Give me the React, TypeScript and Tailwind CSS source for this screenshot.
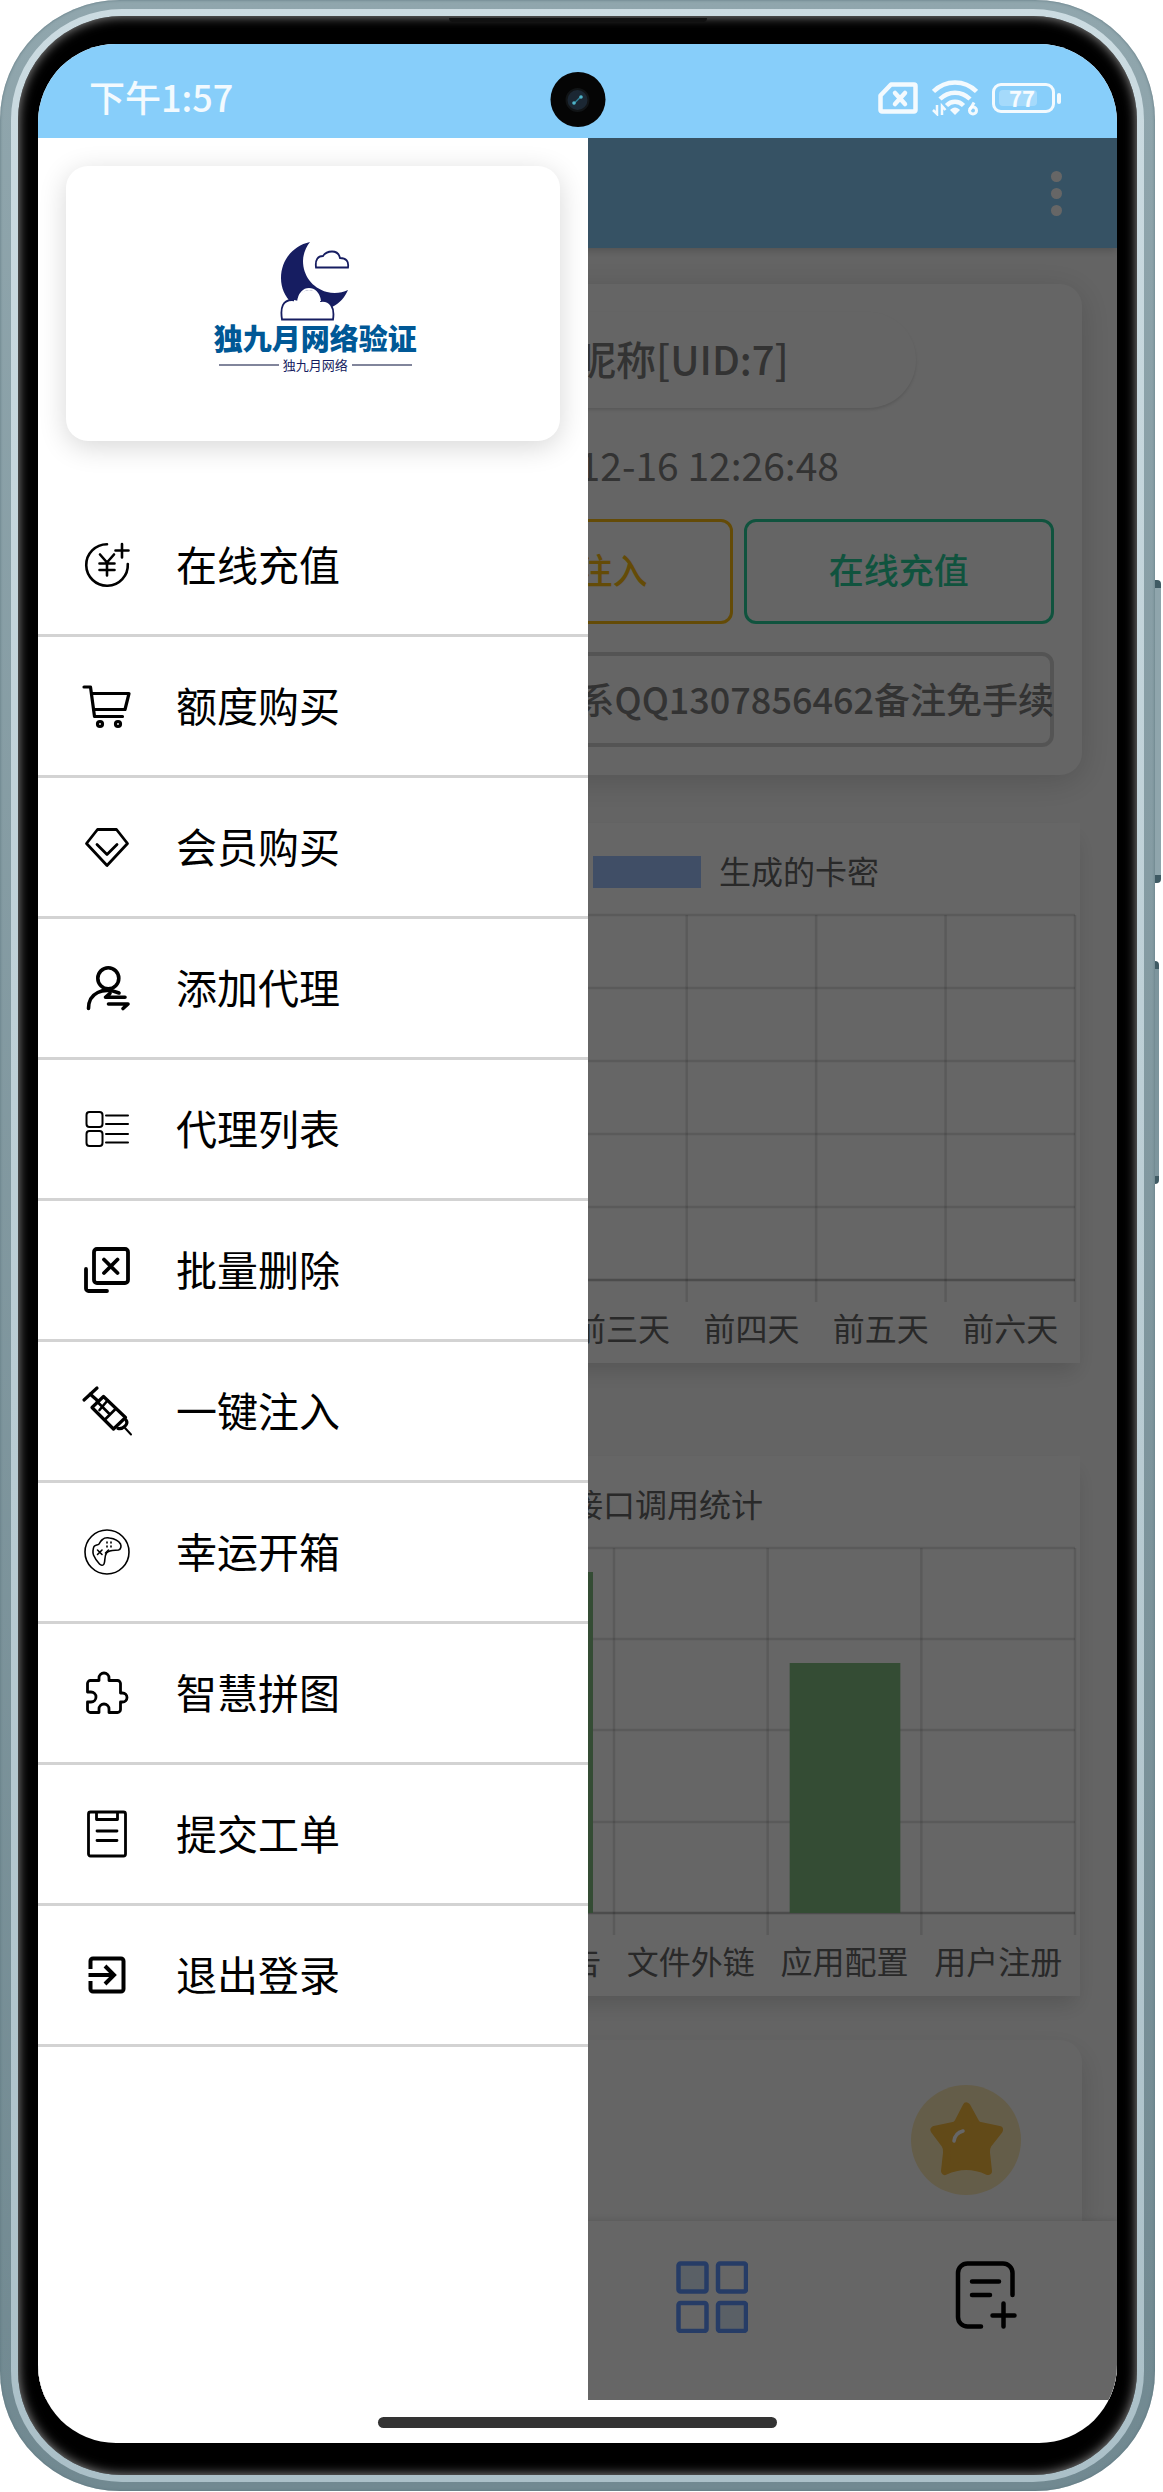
import type { ReactNode } from 'react';

interface MenuItem {
    label: string;
    strokeWidth: number;
    icon: ReactNode;
}

const menuItems: MenuItem[] = [
    {
        label: '在线充值',
        strokeWidth: 2.6,
        icon: (
            <>
                <path d="M24 3.2A20.8 20.8 0 1 0 44.8 23" />
                <path d="M32.5 9.5h13M39 3v13.5" />
                <path d="m17 13.5 7 8 7-8M24 21.5v13M16.5 22.5h15M16.5 29h15" />
            </>
        ),
    },
    {
        label: '额度购买',
        strokeWidth: 3.2,
        icon: (
            <>
                <path d="M1 5h6.500l4 29.500H39.500" />
                <path d="M9 11.500h37l-4 16H11" />
                <circle cx="17" cy="42" r="2.500" />
                <circle cx="35" cy="42" r="2.500" />
            </>
        ),
    },
    {
        label: '会员购买',
        strokeWidth: 2.8,
        icon: (
            <>
                <path d="M14.500 6.500h19l11 14L24 42.500l-20.500-22z" />
                <path d="m14 21.500 10 10 10-10" />
            </>
        ),
    },
    {
        label: '添加代理',
        strokeWidth: 3.6,
        icon: (
            <>
                <circle cx="25.300" cy="14.300" r="10.500" />
                <path d="M5.500 44.500C5.500 29 20 22.500 36 29" />
                <path d="M42 33.300H22.500l4.500-4M25.500 40H45l-5 4.500" />
            </>
        ),
    },
    {
        label: '代理列表',
        strokeWidth: 2,
        icon: (
            <>
                <rect x="3.500" y="7" width="16" height="15" rx="3" />
                <rect x="3.500" y="26" width="16" height="15" rx="3" />
                <path d="M23 10.500h22M23 19h22M23 29h22M23 37.500h22" />
            </>
        ),
    },
    {
        label: '批量删除',
        strokeWidth: 3.8,
        icon: (
            <>
                <rect x="11" y="3" width="34" height="34" rx="3" />
                <path d="m21 13.500 13.500 13.500M34.500 13.500 21 27" />
                <path d="M3 23v19.500a2.500 2.500 0 0 0 2.500 2.500H24" />
            </>
        ),
    },
    {
        label: '一键注入',
        strokeWidth: 3.2,
        icon: (
            <>
                <path d="M1 13 14 1M7 7l8 7" />
                <path d="m20.500 9.500 22 21-12 11.500L9 20.500z" />
                <path d="m14 14.500 12 12M22 32.500l11-11M16.500 23l8-9.500" strokeWidth="2.600" />
                <path d="M43 33c3 4-3 9.500-8 8.500" />
                <path d="m42 41 6 6.500" strokeWidth="2" />
            </>
        ),
    },
    {
        label: '幸运开箱',
        strokeWidth: 1.6,
        icon: (
            <>
                <circle cx="24" cy="24" r="22" />
                <path d="M19.500 11.500c2-2 4-2 7-1.500 4 .5 9 2.500 11 6 1 2 .5 5.500-2 6-4 .5-9-.5-12 3-2.500 3.500-1 8-2.500 11-1 2-3 1.500-4.500 0-3-3-4.500-5.500-6-9-1-2-.5-6.500.5-8.500 1.500-2 3.500-1 5-2.500 1.500-2 1.500-3 3.500-4.500z" />
                <path d="m14.500 22 4.500 4.500M19 22l-4.500 4.500M22.500 25l3-3" />
                <path d="M24 14v1M28 14v1M24 18v1M28 18v1" />
            </>
        ),
    },
    {
        label: '智慧拼图',
        strokeWidth: 2.8,
        icon: (
            <path d="M16 11.500V9a5 5 0 0 1 10 0v2.500h8.500a3 3 0 0 1 3 3V24h2a4.500 4.500 0 0 1 0 9h-2v7.500a3 3 0 0 1-3 3H26V40a5 5 0 0 0-10 0v3.500H7.500a3 3 0 0 1-3-3V33H8a5 5 0 0 0 0-10H4.500v-8.500a3 3 0 0 1 3-3z" />
        ),
    },
    {
        label: '提交工单',
        strokeWidth: 2.8,
        icon: (
            <>
                <rect x="5.500" y="2" width="37" height="44" rx="2" />
                <path d="M13.500 2.500V9.500h21V2.500M14 21h20M14 30.500h20" />
            </>
        ),
    },
    {
        label: '退出登录',
        strokeWidth: 4,
        icon: (
            <>
                <path d="M7.500 18V10a2.500 2.500 0 0 1 2.500-2.500h28a2.500 2.500 0 0 1 2.500 2.500v28a2.500 2.500 0 0 1-2.500 2.500H10a2.500 2.500 0 0 1-2.500-2.500v-8" strokeLinecap="butt" />
                <path d="M5.500 24H31M22 15l9 9-9 9" strokeLinecap="butt" strokeLinejoin="miter" />
            </>
        ),
    },
];

function StatusBar() {
    return (
        <header className="relative flex h-[94px] items-center justify-between bg-[#87cefa] pr-14 pl-[51px] pt-3.5">
            <time className="pb-1 text-[36px] leading-10 font-medium text-white/90">下午1:57</time>
            <div className="absolute top-7 left-1/2 flex size-[55px] -translate-x-1/2 items-center justify-center rounded-full bg-[#050505]">
                <div className="flex size-6 items-center justify-center rounded-full border-2 border-[#111416] bg-[#1b2733]">
                    <svg viewBox="0 0 16 16" className="size-4" aria-hidden="true">
                        <path d="m4 12 8-8" stroke="#2c7f96" strokeWidth="1.500" />
                        <circle cx="4.500" cy="11" r="1.800" fill="#4fb3c8" />
                        <circle cx="11.500" cy="5" r="1.800" fill="#4fb3c8" />
                    </svg>
                </div>
            </div>
            <div className="flex items-center gap-3.5 text-white/90">
                <svg viewBox="0 0 40 32" className="h-8 w-10" fill="none" stroke="currentColor" strokeWidth="4.500" strokeLinejoin="round" aria-hidden="true">
                    <path d="M13 2.500h23a1.500 1.500 0 0 1 1.500 1.500v24a1.500 1.500 0 0 1-1.500 1.500H4A1.500 1.500 0 0 1 2.500 28V13.500z" />
                    <path d="m17 11 10 11M27 11 17 22" strokeLinecap="round" />
                </svg>
                <svg viewBox="0 0 46 36" className="h-9 w-[46px]" fill="none" stroke="currentColor" strokeWidth="4.500" aria-hidden="true">
                    <path d="M1.500 11.500c12-12 31-12 43 0M8 19c8.500-8.500 21.500-8.500 30 0M14.500 25.500c5-5 12-5 17 0" />
                    <path d="m18 30 5 5 5-5c-3-3.500-7-3.500-10 0z" fill="currentColor" stroke="none" />
                    <path d="M5 25v9l-4-4M10 35v-9l3.500 4" strokeWidth="2.500" />
                    <circle cx="41" cy="30.500" r="3.500" strokeWidth="3" />
                    <path d="m38 29.500 4-7" strokeWidth="3" />
                </svg>
                <div className="flex items-center gap-0.5">
                    <div className="h-[30px] w-[63px] rounded-[9px] border-3 border-white/90 p-1">
                        <div className="flex h-full w-[38px] items-center justify-end rounded-sm bg-white/25 pr-0.5 pb-0.5 text-[22px] leading-4 font-bold">77</div>
                    </div>
                    <div className="h-[11px] w-1 rounded-sm bg-white/90" />
                </div>
            </div>
        </header>
    );
}

function Logo() {
    return (
        <div className="flex flex-col items-center pt-2 pl-1">
            <svg viewBox="0 0 70 80" className="h-20 w-[70px]" aria-hidden="true">
                <path d="M30 1C12 5 1 20 1 37c0 10 4 19 11 25l40 4c8-4 13-10 16-17-6 3-14 4-21 2C32 47 23 34 23 20c0-7 3-14 7-19z" fill="#161d61" />
                <path d="M2 78.500C0 66 3 59 12 59c2 0 3 .5 5 1 2-9 7-12 12-12 7 0 11 5 12 12 9-1 14 6 12 18.500z" fill="#fff" stroke="#161d61" strokeWidth="1.800" />
                <path d="M14 60c2 0 2 1 4 1 1-9 6-13 11-13s10 4 11 12" fill="none" stroke="#fff" strokeWidth="2" />
                <path d="M36 26.500c-1-8 2-11.500 7-11.500 2-3 5-4.500 9-4.500s7 2 8 6.500c6 0 9 3 8 9.500z" fill="#fff" stroke="#161d61" strokeWidth="1.800" />
            </svg>
            <p className="text-[29px] leading-8 font-black text-[#005896]">独九月网络验证</p>
            <p className="mt-0.5 flex items-center gap-1 text-[13px] leading-5 text-[#161d61]">
                <span className="h-0.5 w-[60px] bg-[#81859b]" />
                独九月网络
                <span className="h-0.5 w-[60px] bg-[#81859b]" />
            </p>
        </div>
    );
}

function Drawer() {
    return (
        <aside className="absolute inset-y-0 left-0 w-[51%] overflow-hidden bg-white pt-7">
            <div className="mx-7 flex h-[275px] items-center justify-center rounded-[22px] bg-white shadow-[0_6px_28px_rgba(0,0,0,0.16)]">
                <Logo />
            </div>
            <nav className="mt-[55px]">
                {menuItems.map((item) => (
                    <a
                        key={item.label}
                        href="#"
                        className="flex h-[141px] items-center gap-[45px] border-b-3 border-[#d3d3d3] pl-[45px] text-[41px] leading-none text-black"
                    >
                        <svg
                            viewBox="0 0 48 48"
                            className="size-12 overflow-visible"
                            fill="none"
                            stroke="currentColor"
                            strokeWidth={item.strokeWidth}
                            strokeLinecap="round"
                            strokeLinejoin="round"
                            aria-hidden="true"
                        >
                            {item.icon}
                        </svg>
                        <span className="pb-1">{item.label}</span>
                    </a>
                ))}
            </nav>
        </aside>
    );
}

interface ChartProps {
    left: number;
    labels: string[];
    rows: number[];
    bars: number[];
    barColor: string;
    children: ReactNode;
}

function BarChart({ left, labels, rows, bars, barColor, children }: ChartProps) {
    const right = 1000;
    const step = (right - left) / labels.length;
    const top = rows[0];
    const bottom = rows[rows.length - 1];

    return (
        <svg viewBox="0 0 1005 540" className="block w-full bg-white shadow-[0_12px_20px_-4px_rgba(0,0,0,0.14)]" fontSize="32" fill="#666">
            {children}
            {rows.map((y) => (
                <path key={y} d={`M${left} ${y}H${right}`} stroke="#000" strokeWidth="2.500" opacity={y === bottom ? 0.25 : 0.11} />
            ))}
            {[...labels, ''].map((_, i) => (
                <path key={i} d={`M${left + i * step} ${top}V${bottom + 22}`} stroke="#000" strokeWidth="2.500" opacity="0.110" />
            ))}
            {bars.map((value, i) => (
                <rect key={i} x={left + i * step + 22} y={bottom - value} width={step - 43} height={value} fill={barColor} />
            ))}
            {labels.map((label, i) => (
                <text key={i} x={left + (i + 0.5) * step} y={bottom + 61} textAnchor="middle">
                    {label}
                </text>
            ))}
        </svg>
    );
}

function AccountCard() {
    return (
        <section className="mx-[35px] mt-9 rounded-[22px] bg-[#fcfcfc] p-7 shadow-[0_6px_32px_rgba(0,0,0,0.16)]">
            <div className="mx-auto flex h-24 w-[71%] items-center justify-end rounded-full pr-[127px] pb-1 text-[40px] font-medium whitespace-nowrap text-[#808080] shadow-[0_2px_3px_rgba(0,0,0,0.12)]">
                昵称[UID:7]
            </div>
            <p className="mt-8 pr-[215px] text-right text-[39px] leading-12 text-[#808080]">12-16 12:26:48</p>
            <div className="mt-[31px] grid grid-cols-3 gap-[11px] text-[35px] font-medium">
                <button type="button" className="col-start-2 h-[105px] rounded-xl border-3 border-[#f9bb12] pb-1 text-[#f9bb12]">
                    一键注入
                </button>
                <button type="button" className="h-[105px] rounded-xl border-3 border-[#2ad09c] pb-1 text-[#2ad09c]">
                    在线充值
                </button>
            </div>
            <div className="relative mt-7 h-[95px] rounded-xl border-4 border-[#d3d3d3]">
                <p className="absolute inset-y-0 -right-1 flex items-center justify-end overflow-hidden pb-1 text-[36px] font-medium whitespace-nowrap text-[#808080]">
                    联系QQ1307856462备注免手续
                </p>
            </div>
        </section>
    );
}

function Dashboard() {
    return (
        <div className="bg-[#fafafa]">
            <div className="flex h-[110px] items-center justify-end bg-[#87cefa] pr-[55px] shadow-[0_2px_8px_rgba(0,0,0,0.2)]">
                <button type="button" aria-label="更多" className="flex flex-col gap-1.5">
                    <span className="size-[11px] rounded-full bg-white" />
                    <span className="size-[11px] rounded-full bg-white" />
                    <span className="size-[11px] rounded-full bg-white" />
                </button>
            </div>
            <AccountCard />
            <div className="mx-[37px] mt-12">
                <BarChart
                    left={94}
                    labels={['', '', '', '前三天', '前四天', '前五天', '前六天']}
                    rows={[92, 165, 238, 311, 384, 457]}
                    bars={[]}
                    barColor="#a0c4ff"
                >
                    <rect x="518" y="33" width="108" height="32" fill="#a0c4ff" />
                    <text x="644" y="61">生成的卡密</text>
                </BarChart>
            </div>
            <div className="mx-[37px] mt-[93px]">
                <BarChart
                    left={78}
                    labels={['', '', '应用公告', '文件外链', '应用配置', '用户注册']}
                    rows={[92, 183, 274, 366, 457]}
                    bars={[0, 0, 341, 0, 250, 0]}
                    barColor="#82be82"
                >
                    <text x="496" y="61">接口调用统计</text>
                </BarChart>
            </div>
            <section className="mx-[35px] mt-11 flex h-[181px] justify-end rounded-t-[22px] bg-[#fcfcfc] pt-[45px] pr-[61px] shadow-[0_12px_28px_rgba(0,0,0,0.14)]">
                <svg viewBox="0 0 110 110" className="size-[110px]" aria-hidden="true">
                    <circle cx="55" cy="55" r="55" fill="#fbe8b6" />
                    <path
                        d="M55.500 21.500 64 37q1.500 3 5 4l19 4-11 14q-2.500 4-2 9l2 18q-22-10-43 0l2-18q.5-5-2-9L23.500 45l19-4q3.500-1 5-4z"
                        fill="#f5b83d"
                        stroke="#f5b83d"
                        strokeWidth="8"
                        strokeLinejoin="round"
                    />
                    <path d="M43 56q1-8 9-10" fill="none" stroke="#fff" strokeWidth="3.500" strokeLinecap="round" />
                </svg>
            </section>
            <nav className="relative grid h-[179px] grid-cols-4 items-start justify-items-center bg-white pt-10 shadow-[0_-1px_6px_rgba(0,0,0,0.12)]">
                <a href="#" aria-label="应用" className="col-start-3">
                    <svg viewBox="0 0 72 72" className="size-[72px]" fill="none" stroke="#6096ff" strokeWidth="4.500" aria-hidden="true">
                        <rect x="2.500" y="2.500" width="28" height="28" rx="2" fill="#e1efff" />
                        <rect x="42" y="2.500" width="28" height="28" rx="2" />
                        <rect x="2.500" y="42" width="28" height="28" rx="2" />
                        <rect x="42" y="42" width="28" height="28" rx="2" fill="#e1efff" />
                    </svg>
                </a>
                <a href="#" aria-label="新建">
                    <svg viewBox="0 0 72 72" className="size-[72px]" fill="none" stroke="#000" strokeWidth="4.500" strokeLinecap="round" aria-hidden="true">
                        <path d="M66.500 34V12a9.500 9.500 0 0 0-9.500-9.500H21.500A9.500 9.500 0 0 0 12 12v44a9.500 9.500 0 0 0 9.500 9.500H35" />
                        <path d="M26 20.500h27M26 34h18M46.500 54.500h22M57.500 42.500v23" />
                    </svg>
                </a>
            </nav>
        </div>
    );
}

export default function App() {
    return (
        <div className="bg-white font-['Noto_Sans_CJK_SC',sans-serif]">
            <div className="relative mr-2">
                <div className="absolute top-[580px] -right-1.5 h-[303px] w-3 rounded-sm border-y-8 border-[#3f5a63] bg-[#8fa5ac]" />
                <div className="absolute top-[961px] -right-1 h-[223px] w-3 rounded-sm border-y-8 border-[#3f5a63] bg-[#7d959d]" />
                <div className="relative rounded-[120px] bg-linear-to-b from-[#90a6ad] to-[#718991] px-[11px] py-[9px] shadow-[inset_0_0_3px_#5b747d]">
                    <div className="rounded-[111px] bg-linear-to-b from-[#cbdbe1] to-[#abc0c8] p-[7px]">
                        <div className="relative rounded-[104px] bg-black px-5 pt-7 pb-8 shadow-[inset_0_0_12px_#9a9a9a]">
                            <div className="absolute top-0.5 left-1/2 h-1 w-[258px] -translate-x-1/2 rounded-b-md bg-[#111]" />
                            <div className="overflow-hidden rounded-[78px] bg-white">
                                <StatusBar />
                                <div className="relative overflow-hidden">
                                    <Dashboard />
                                    <div className="absolute inset-0 bg-black/60" />
                                    <Drawer />
                                </div>
                                <div className="flex h-[43px] justify-center pt-[17px]">
                                    <div className="h-[11px] w-[37%] rounded-full bg-[#333]" />
                                </div>
                            </div>
                        </div>
                    </div>
                </div>
            </div>
        </div>
    );
}
